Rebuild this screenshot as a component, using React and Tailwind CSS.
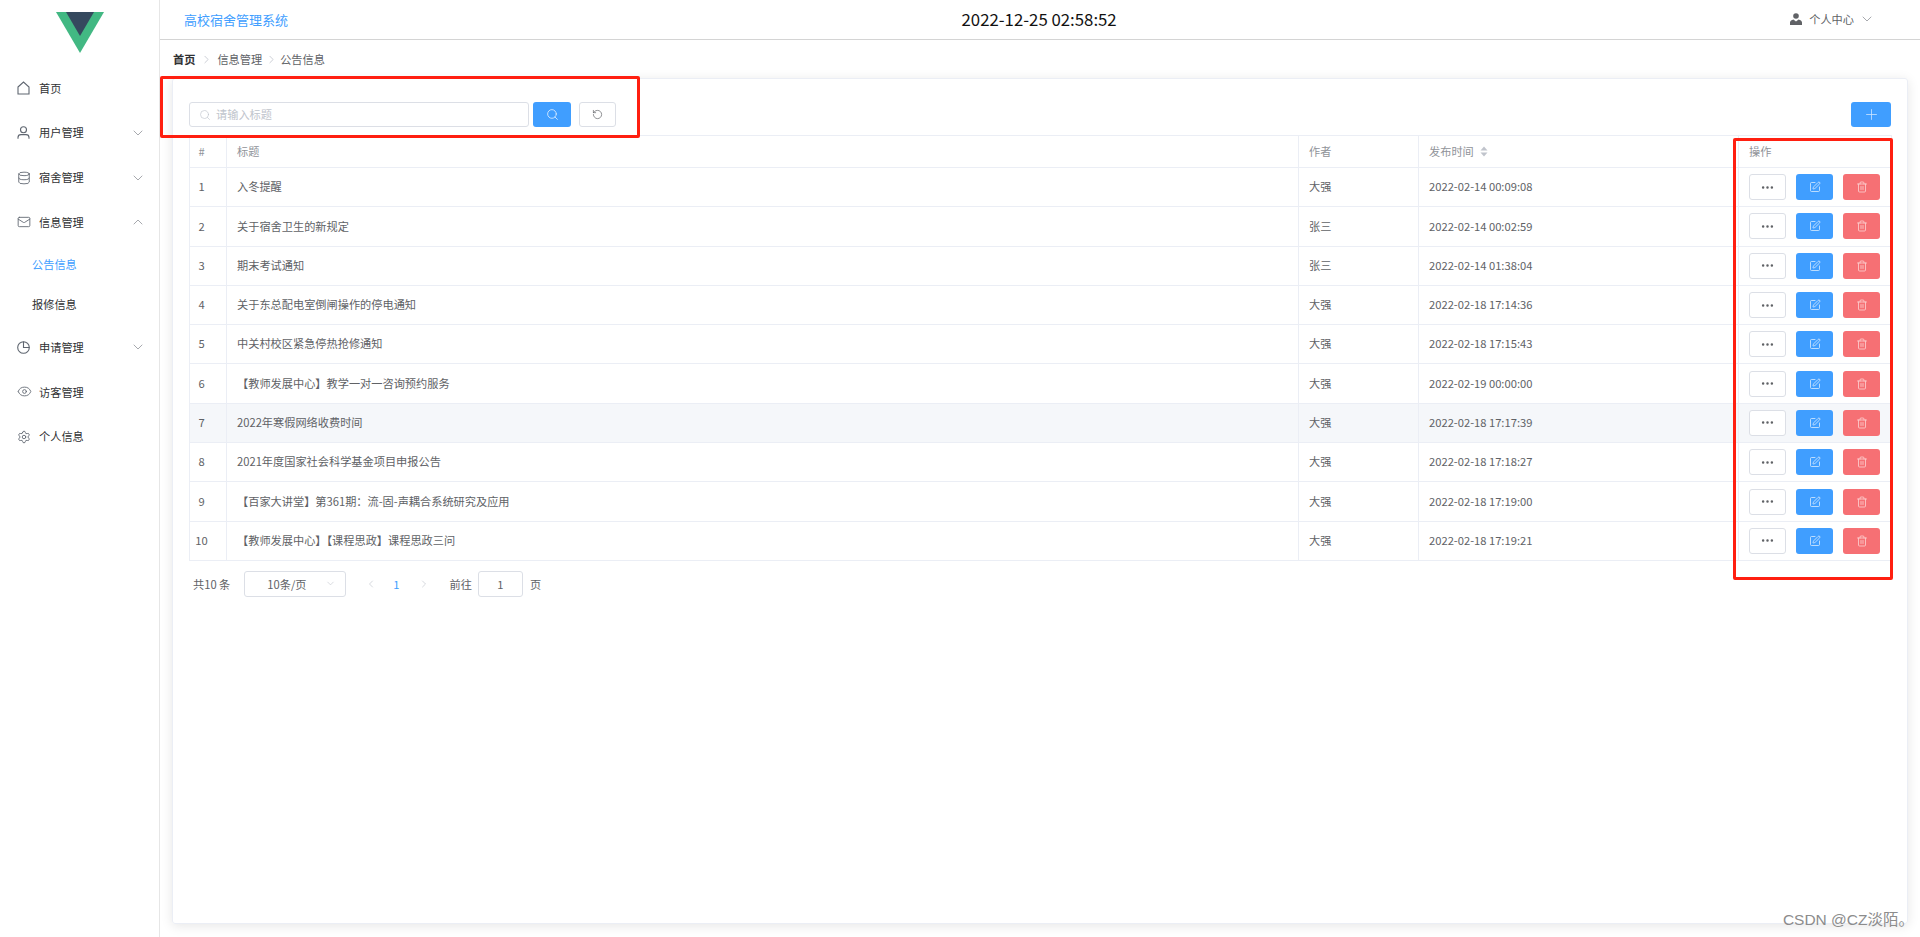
import { ChevronDown, ChevronUp, ChevronLeft, ChevronRight, Search, RotateCcw, Plus, Trash2, SquarePen, Ellipsis, Database, Mail, Eye, Settings } from 'lucide-react';

const notices = [
  { id: 1, title: '入冬提醒', author: '大强', time: '2022-02-14 00:09:08' },
  { id: 2, title: '关于宿舍卫生的新规定', author: '张三', time: '2022-02-14 00:02:59' },
  { id: 3, title: '期末考试通知', author: '张三', time: '2022-02-14 01:38:04' },
  { id: 4, title: '关于东总配电室倒闸操作的停电通知', author: '大强', time: '2022-02-18 17:14:36' },
  { id: 5, title: '中关村校区紧急停热抢修通知', author: '大强', time: '2022-02-18 17:15:43' },
  { id: 6, title: '【教师发展中心】教学一对一咨询预约服务', author: '大强', time: '2022-02-19 00:00:00' },
  { id: 7, title: '2022年寒假网络收费时间', author: '大强', time: '2022-02-18 17:17:39', hover: true },
  { id: 8, title: '2021年度国家社会科学基金项目申报公告', author: '大强', time: '2022-02-18 17:18:27' },
  { id: 9, title: '【百家大讲堂】第361期：流-固-声耦合系统研究及应用', author: '大强', time: '2022-02-18 17:19:00' },
  { id: 10, title: '【教师发展中心】【课程思政】课程思政三问', author: '大强', time: '2022-02-18 17:19:21' },
];

function HouseIcon() {
  return (
    <svg width="13" height="14" viewBox="0 0 13 14" fill="none" stroke="currentColor" strokeWidth="1.1">
      <path d="M1 6 6.5 1 12 6V13H1Z" />
    </svg>
  );
}

function UserIcon() {
  return (
    <svg width="13" height="13" viewBox="0 0 13 13" fill="none" stroke="currentColor" strokeWidth="1.1">
      <circle cx="6.5" cy="3.8" r="3" />
      <path d="M1 12.8V11.4C1 9.6 2.4 8.6 4 8.6H9C10.6 8.6 12 9.6 12 11.4V12.8" />
    </svg>
  );
}

function PieIcon() {
  return (
    <svg width="13" height="13" viewBox="0 0 13 13" fill="none" stroke="currentColor" strokeWidth="1.1">
      <path d="M6.5 0.7A5.8 5.8 0 1 0 12.3 6.5H6.5Z" />
      <path d="M6.5 0.7A5.8 5.8 0 0 1 12.3 6.5" />
    </svg>
  );
}

function PersonFilled() {
  return (
    <svg width="12" height="12" viewBox="0 0 12 12" fill="#606266">
      <circle cx="6" cy="3" r="2.8" />
      <path d="M0 12V9.6C0 8 1.6 7 3.4 6.6L6 8.4 8.6 6.6C10.4 7 12 8 12 9.6V12Z" />
    </svg>
  );
}

function VueLogo() {
  return (
    <svg width="48" height="41" viewBox="0 0 48 41">
      <path d="M0 0H48L24 41Z" fill="#42b883" />
      <path d="M10 0H38L24 24Z" fill="#35495e" />
    </svg>
  );
}

function MenuItem({ icon, label, arrow }) {
  return (
    <div className="flex h-[44.8px] items-center pl-[17px] pr-[13px] text-[#303133]">
      <span className="flex w-[22px] text-[#5f6670]">{icon}</span>
      <span>{label}</span>
      {arrow === 'down' && <ChevronDown size={16} strokeWidth={1.2} className="ml-auto text-[#909399]" />}
      {arrow === 'up' && <ChevronUp size={16} strokeWidth={1.2} className="ml-auto text-[#909399]" />}
    </div>
  );
}

function SubItem({ label, active }) {
  return (
    <div className={`flex h-10 items-center pl-8 ${active ? 'text-[#409eff]' : 'text-[#303133]'}`}>
      {label}
    </div>
  );
}

function Sidebar() {
  return (
    <aside className="w-40 shrink-0 border-r border-[#e6e6e6] bg-white">
      <div className="flex h-[65.6px] justify-center pt-3">
        <VueLogo />
      </div>
      <MenuItem icon={<HouseIcon />} label="首页" />
      <MenuItem icon={<UserIcon />} label="用户管理" arrow="down" />
      <MenuItem icon={<Database size={14} strokeWidth={1.5} />} label="宿舍管理" arrow="down" />
      <MenuItem icon={<Mail size={14} strokeWidth={1.5} />} label="信息管理" arrow="up" />
      <SubItem label="公告信息" active />
      <SubItem label="报修信息" />
      <MenuItem icon={<PieIcon />} label="申请管理" arrow="down" />
      <MenuItem icon={<Eye size={15} strokeWidth={1.4} />} label="访客管理" />
      <MenuItem icon={<Settings size={14} strokeWidth={1.5} />} label="个人信息" />
    </aside>
  );
}

function Header() {
  return (
    <header className="flex h-10 items-center justify-between border-b border-[#d4d4d4] pl-6 pr-[45px]">
      <div className="text-[13px] text-[#409eff]">高校宿舍管理系统</div>
      <div className="text-[16.8px] text-[#111]">2022-12-25 02:58:52</div>
      <div className="flex items-center text-[#606266]">
        <PersonFilled />
        <span className="ml-[7px]">个人中心</span>
        <ChevronDown size={16} strokeWidth={1.2} className="ml-[5px] text-[#909399]" />
      </div>
    </header>
  );
}

function Breadcrumb() {
  return (
    <nav className="flex h-[38px] items-center pl-[13px] text-[#606266]">
      <span className="font-bold text-[#303133]">首页</span>
      <ChevronRight size={13} strokeWidth={1.5} className="mx-[4.5px] text-[#c0c4cc]" />
      <span>信息管理</span>
      <ChevronRight size={13} strokeWidth={1.5} className="mx-[2.5px] text-[#c0c4cc]" />
      <span>公告信息</span>
    </nav>
  );
}

function Toolbar() {
  return (
    <div className="mb-2 flex h-[25px] items-stretch">
      <div className="flex w-[340px] items-center rounded-[3px] border border-[#dcdfe6] pl-[9px] text-[#c0c4cc]">
        <Search size={12} strokeWidth={1.3} />
        <span className="ml-[5px]">请输入标题</span>
      </div>
      <button className="ml-1 flex w-[38px] items-center justify-center rounded-[3px] bg-[#409eff] text-[#e3f0ff]">
        <Search size={13} strokeWidth={1.5} />
      </button>
      <button className="ml-2 flex w-[37px] items-center justify-center rounded-[3px] border border-[#dcdfe6] text-[#606266]">
        <RotateCcw size={11} strokeWidth={1.5} />
      </button>
      <button className="ml-auto flex w-10 items-center justify-center rounded-[3px] bg-[#409eff] text-[#cfe6ff]">
        <Plus size={17} strokeWidth={1.1} />
      </button>
    </div>
  );
}

function Actions() {
  return (
    <div className="flex gap-[10px]">
      <button className="flex h-[26px] w-[37px] items-center justify-center rounded-[3px] border border-[#dcdfe6] bg-white text-[#606266]">
        <Ellipsis size={15} strokeWidth={2} />
      </button>
      <button className="flex h-[26px] w-[37px] items-center justify-center rounded-[3px] bg-[#409eff] text-[#d9ecff]">
        <SquarePen size={12} strokeWidth={1.6} />
      </button>
      <button className="flex h-[26px] w-[37px] items-center justify-center rounded-[3px] bg-[#f67074] text-[#fcd3d3]">
        <Trash2 size={12} strokeWidth={1.6} />
      </button>
    </div>
  );
}

function NoticeTable() {
  return (
    <table className="w-[1702px] table-fixed border-collapse border border-[#ebeef5] text-[#606266]">
      <colgroup>
        <col className="w-[37px]" />
        <col className="w-[1072px]" />
        <col className="w-[120px]" />
        <col className="w-[320px]" />
        <col className="w-[153px]" />
      </colgroup>
      <thead>
        <tr className="h-8 text-left text-[#909399]">
          <th className="border-r border-[#ebeef5] pr-[13px] text-center font-normal">#</th>
          <th className="border-r border-[#ebeef5] pl-[10px] font-normal">标题</th>
          <th className="border-r border-[#ebeef5] pl-[10px] font-normal">作者</th>
          <th className="border-r border-[#ebeef5] pl-[10px] font-normal">
            <span className="inline-flex items-center">
              发布时间
              <svg width="8" height="11" viewBox="0 0 8 11" fill="#c0c4cc" className="ml-[6px]">
                <path d="M4 0.5 7.5 4.5H0.5Z" />
                <path d="M4 10.5 0.5 6.5H7.5Z" />
              </svg>
            </span>
          </th>
          <th className="pl-[10px] font-normal">操作</th>
        </tr>
      </thead>
      <tbody>
        {notices.map((n) => (
          <tr key={n.id} className={`h-[39.3px] border-t border-[#ebeef5] ${n.hover ? 'bg-[#f5f7fa]' : ''}`}>
            <td className="border-r border-[#ebeef5] pb-px pr-[13px] text-center">{n.id}</td>
            <td className="border-r border-[#ebeef5] pb-px pl-[10px]">{n.title}</td>
            <td className="border-r border-[#ebeef5] pb-px pl-[10px]">{n.author}</td>
            <td className="border-r border-[#ebeef5] pb-px pl-[10px]">{n.time}</td>
            <td className="pl-[10px]"><Actions /></td>
          </tr>
        ))}
      </tbody>
    </table>
  );
}

function Pagination() {
  return (
    <div className="mt-[10px] flex h-[26px] items-center text-[#606266]">
      <span className="ml-1">共10 条</span>
      <div className="ml-[14px] flex h-full w-[102px] items-center rounded-[3px] border border-[#dcdfe6] pl-[22px]">
        10条/页
        <ChevronDown size={11} strokeWidth={1.3} className="ml-auto mr-[9px] text-[#c0c4cc]" />
      </div>
      <ChevronLeft size={12} strokeWidth={1.3} className="ml-[19px] text-[#c0c4cc]" />
      <span className="ml-4 text-[#409eff]">1</span>
      <ChevronRight size={12} strokeWidth={1.3} className="ml-[18px] text-[#c0c4cc]" />
      <span className="ml-5">前往</span>
      <div className="ml-[6px] flex h-full w-[45px] items-center justify-center rounded-[3px] border border-[#dcdfe6]">1</div>
      <span className="ml-[7px]">页</span>
    </div>
  );
}

export default function App() {
  return (
    <div className="relative flex h-[937px] overflow-hidden bg-white font-['Noto_Sans_CJK_SC','Liberation_Sans',sans-serif] text-[11.2px]">
      <Sidebar />
      <main className="flex min-w-0 flex-1 flex-col">
        <Header />
        <Breadcrumb />
        <section className="mb-[13px] ml-3 mr-3 flex-1 rounded-[3px] border border-[#ebeef5] px-4 pt-[23px] shadow-[0_2px_12px_rgba(0,0,0,0.1)]">
          <Toolbar />
          <NoticeTable />
          <Pagination />
        </section>
      </main>

      {/* red annotation boxes drawn over the screenshot */}
      <div className="absolute left-[160px] top-[76px] h-[62px] w-[480px] rounded-[2px] border-[3px] border-[#ff1f10]" />
      <div className="absolute left-[1733px] top-[138px] h-[442px] w-[160px] rounded-[2px] border-[3px] border-[#ff1f10]" />

      <div className="absolute bottom-[10px] right-[6px] font-['Liberation_Sans','Noto_Sans_CJK_SC',sans-serif] text-[15.5px] leading-none text-[#8c8c8c]">CSDN @CZ淡陌。</div>
    </div>
  );
}
